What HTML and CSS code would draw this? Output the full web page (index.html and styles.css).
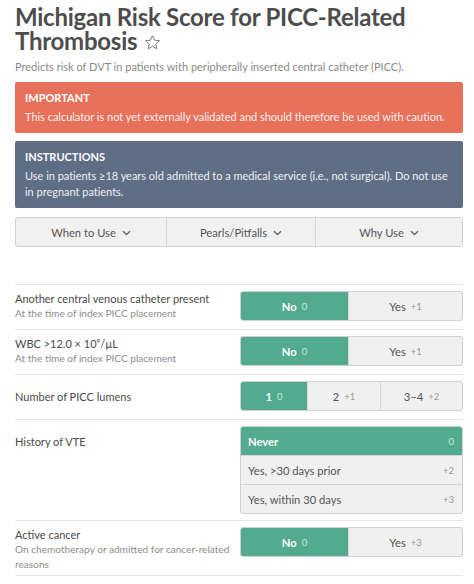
FILE: index.html
```html
<!DOCTYPE html>
<html>
<head>
<meta charset="utf-8">
<link rel="stylesheet" href="styles.css">
</head>
<body>
<div class="page">
  <h1 class="title">Michigan Risk Score for PICC-Related Thrombosis <svg class="star" width="17" height="17" viewBox="0 0 24 24"><path d="M12 2.5l2.9 6.3 6.9.7-5.2 4.6 1.5 6.8L12 17.4l-6.1 3.5 1.5-6.8-5.2-4.6 6.9-.7z" fill="none" stroke="#666" stroke-width="1.2" stroke-linejoin="round"/></svg></h1>
  <p class="subtitle">Predicts risk of DVT in patients with peripherally inserted central catheter (PICC).</p>

  <div class="alert alert-important">
    <div class="alert-head">IMPORTANT</div>
    <div class="alert-body">This calculator is not yet externally validated and should therefore be used with caution.</div>
  </div>
  <div class="alert alert-instructions">
    <div class="alert-head">INSTRUCTIONS</div>
    <div class="alert-body">Use in patients ≥18 years old admitted to a medical service (i.e., not surgical). Do not use in pregnant patients.</div>
  </div>

  <div class="tabs">
    <div class="tab">When to Use <svg class="chev" width="9" height="6" viewBox="0 0 9 6"><polyline points="1,1.2 4.5,4.6 8,1.2" fill="none" stroke="#666" stroke-width="1.4"/></svg></div>
    <div class="tab">Pearls/Pitfalls <svg class="chev" width="9" height="6" viewBox="0 0 9 6"><polyline points="1,1.2 4.5,4.6 8,1.2" fill="none" stroke="#666" stroke-width="1.4"/></svg></div>
    <div class="tab">Why Use <svg class="chev" width="9" height="6" viewBox="0 0 9 6"><polyline points="1,1.2 4.5,4.6 8,1.2" fill="none" stroke="#666" stroke-width="1.4"/></svg></div>
  </div>

  <div class="rows">
    <div class="row">
      <div class="label"><div class="name">Another central venous catheter present</div><div class="hint">At the time of index PICC placement</div></div>
      <div class="seg seg2">
        <div class="opt on">No <span class="pts">0</span></div>
        <div class="opt">Yes <span class="pts">+1</span></div>
      </div>
    </div>
    <div class="row">
      <div class="label"><div class="name">WBC &gt;12.0 × 10⁹/µL</div><div class="hint">At the time of index PICC placement</div></div>
      <div class="seg seg2">
        <div class="opt on">No <span class="pts">0</span></div>
        <div class="opt">Yes <span class="pts">+1</span></div>
      </div>
    </div>
    <div class="row">
      <div class="label label-c"><div class="name">Number of PICC lumens</div></div>
      <div class="seg seg3">
        <div class="opt on">1 <span class="pts">0</span></div>
        <div class="opt">2 <span class="pts">+1</span></div>
        <div class="opt">3–4 <span class="pts">+2</span></div>
      </div>
    </div>
    <div class="row row-list">
      <div class="label label-c"><div class="name">History of VTE</div></div>
      <div class="list">
        <div class="item on"><span>Never</span><span class="pts">0</span></div>
        <div class="item"><span>Yes, &gt;30 days prior</span><span class="pts">+2</span></div>
        <div class="item"><span>Yes, within 30 days</span><span class="pts">+3</span></div>
      </div>
    </div>
    <div class="row row-tall">
      <div class="label"><div class="name">Active cancer</div><div class="hint">On chemotherapy or admitted for cancer-related reasons</div></div>
      <div class="seg seg2">
        <div class="opt on">No <span class="pts">0</span></div>
        <div class="opt">Yes <span class="pts">+3</span></div>
      </div>
    </div>
  </div>
</div>
</body>
</html>
```

FILE: styles.css
```css
* { box-sizing: border-box; }
html, body { margin: 0; padding: 0; background: #fff; }
body { font-family: "Lato", "Noto Sans", sans-serif; color: #4a4a4a; }
.page { padding: 5px 11px 0 15px; }

.title {
  margin: 0;
  font-size: 24px;
  line-height: 24px;
  font-weight: 700;
  color: #4d4d4d;
  letter-spacing: -0.25px;
}
.star { vertical-align: -1px; margin-left: 1px; }
.subtitle {
  margin: 6px 0 0;
  font-size: 11px;
  line-height: 15px;
  color: #8a8a8a;
}

.alert { margin-top: 8px; border-radius: 2px; color: #fff; padding: 8px 8px 8px 10px; }
.alert-important { background: #e8715b; }
.alert-instructions { background: #5f6e85; }
.alert-head { font-size: 11px; font-weight: 700; line-height: 16px; }
.alert-body { font-size: 11px; line-height: 16px; margin-top: 3px; color: #fbeeea; letter-spacing: -0.02px; }
.alert-instructions .alert-body { color: #eef0f4; }

.tabs {
  margin-top: 9px;
  display: grid;
  grid-template-columns: 150px 149px 1fr;
  border: 1px solid #d2d2d2;
  border-radius: 3px;
  background: #f1f1f1;
  height: 30px;
}
.tab {
  display: flex; align-items: center; justify-content: center;
  font-size: 11.2px; color: #555;
  border-left: 1px solid #d6d6d6;
}
.tab:first-child { border-left: none; }
.chev { margin-left: 6px; margin-top: 1px; }

.rows { margin-top: 37px; border-top: 1px solid #e6e6e6; }
.row {
  display: grid;
  grid-template-columns: 225px 223px;
  align-items: start;
  border-bottom: 1px solid #e6e6e6;
  padding: 6px 0 8px;
}
.row-list { padding-bottom: 6px; }
.row-tall { padding-bottom: 4px; }
.label { display: flex; flex-direction: column; }
.label-c { justify-content: center; min-height: 30px; }
.name { font-size: 11px; line-height: 15px; color: #4a4a4a; }
.hint { font-size: 10.1px; line-height: 15px; color: #8c8c8c; }
.row-tall .hint { line-height: 14.5px; }

.seg {
  display: grid; height: 30px;
  border: 1px solid #d0d0d0; border-radius: 3px; overflow: hidden;
  background: #f0f0f0;
}
.seg2 { grid-template-columns: 107px 1fr; }
.seg3 { grid-template-columns: 66px 73px 1fr; }
.opt {
  display: flex; align-items: center; justify-content: center;
  font-size: 11.2px; color: #555;
  border-left: 1px solid #d6d6d6;
}
.opt:first-child { border-left: none; }
.opt .pts { font-size: 9.5px; color: #999; margin-left: 5px; }
.opt.on { background: #52ab8f; color: #fff; font-weight: 700; }
.opt.on .pts { color: #c9e8dd; font-weight: 400; }

.list {
  border: 1px solid #d0d0d0; border-radius: 3px; overflow: hidden;
  background: #f0f0f0;
}
.item {
  display: flex; justify-content: space-between; align-items: center;
  height: 29px; padding: 0 8px 0 7px;
  font-size: 11.2px; color: #555;
  border-top: 1px solid #d6d6d6;
}
.item:first-child { border-top: none; height: 28px; }
.item .pts { font-size: 9.5px; color: #999; }
.item.on { background: #52ab8f; color: #fff; font-weight: 700; }
.item.on .pts { color: #c9e8dd; font-weight: 400; }
```
